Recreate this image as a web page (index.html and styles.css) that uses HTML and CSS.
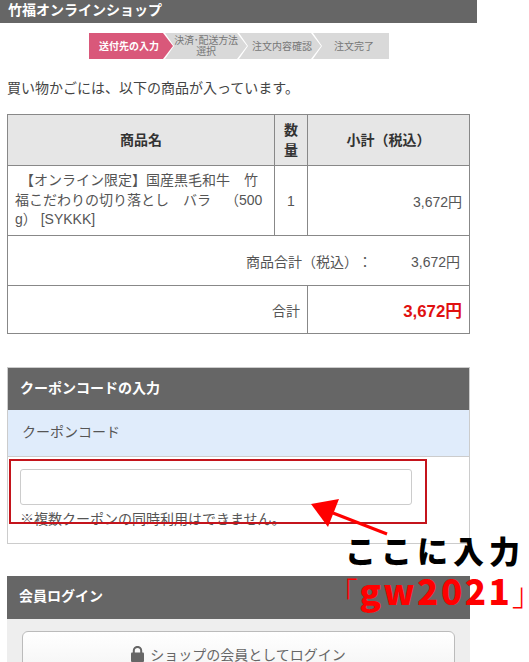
FILE: index.html
```html
<!DOCTYPE html>
<html lang="ja">
<head>
    <meta charset="utf-8">
    <title>竹福オンラインショップ</title>
    <link rel="stylesheet" href="styles.css">
</head>
<body>
<div class="page">
    <div class="shop-title">竹福オンラインショップ</div>

    <div class="steps">
        <div class="step step-first step-active">送付先の入力</div>
        <div class="step step-second">決済･配送方法<br>選択</div>
        <div class="step step-third">注文内容確認</div>
        <div class="step step-last">注文完了</div>
    </div>

    <p class="intro">買い物かごには、以下の商品が入っています。</p>

    <table class="cart">
        <colgroup>
            <col class="col-name">
            <col class="col-qty">
            <col class="col-sub">
        </colgroup>
        <tr class="row-head">
            <th>商品名</th>
            <th>数量</th>
            <th>小計（税込）</th>
        </tr>
        <tr class="row-item">
            <td class="item-name">【オンライン限定】国産黒毛和牛　竹福こだわりの切り落とし　バラ　（500g） [SYKKK]</td>
            <td class="item-qty">1</td>
            <td class="price">3,672円</td>
        </tr>
        <tr class="row-subtotal">
            <td colspan="3">
                <div class="subtotal">
                    <span>商品合計（税込）：</span>
                    <span class="subtotal-price">3,672円</span>
                </div>
            </td>
        </tr>
        <tr class="row-total">
            <td colspan="2" class="total-label">合計</td>
            <td class="total-price">3,672円</td>
        </tr>
    </table>

    <div class="panel coupon">
        <h2 class="panel-title">クーポンコードの入力</h2>
        <div class="coupon-label">クーポンコード</div>
        <div class="coupon-body">
            <input type="text" class="coupon-input">
            <p class="coupon-note">※複数クーポンの同時利用はできません。</p>
        </div>
    </div>

    <div class="panel login">
        <h2 class="panel-title">会員ログイン</h2>
        <div class="login-body">
            <button class="login-button">
                <svg class="lock" width="13" height="16" viewBox="0 0 13 16">
                    <path d="M2.8 7V4.6a3.7 3.7 0 0 1 7.4 0V7" fill="none" stroke="#666" stroke-width="2"/>
                    <rect x="0" y="6.5" width="13" height="9.5" rx="1" fill="#666"/>
                </svg>
                ショップの会員としてログイン
            </button>
        </div>
    </div>

    <!-- annotation drawn over the screenshot -->
    <div class="mark-box"></div>
    <svg class="mark-arrow" width="90" height="45" viewBox="0 0 90 45">
        <path d="M82 39 L28 18" stroke="#f00" stroke-width="3" fill="none"/>
        <path d="M6 9 L34 4 L23 32 Z" fill="#f00"/>
    </svg>
    <div class="mark-text">ここに入力</div>
    <div class="mark-code"><span class="mark-bracket">「</span>gw2021<span class="mark-bracket">」</span></div>
</div>
</body>
</html>
```

FILE: styles.css
```css
html, body {
    margin: 0;
    padding: 0;
    background-color: #fff;
}

body {
    font-family: "Liberation Sans", "Noto Sans CJK JP", sans-serif;
    color: #555;
    font-size: 14px;
    text-spacing-trim: space-all;
}

.page {
    position: relative;
    width: 529px;
    height: 662px;
    overflow: hidden;
}

.shop-title {
    width: 469px;
    height: 23px;
    padding-left: 8px;
    background-color: #666;
    color: #fff;
    font-size: 14px;
    font-weight: bold;
    line-height: 20px;
}

/* steps */
.steps {
    display: flex;
    margin: 10px 0 0 89px;
    height: 26px;
}

.step {
    display: flex;
    align-items: center;
    justify-content: center;
    height: 26px;
    margin-left: -8px;
    background-color: #d9d9d9;
    color: #777;
    font-size: 10px;
    line-height: 11px;
    text-align: center;
    clip-path: polygon(0 0, calc(100% - 10px) 0, 100% 50%, calc(100% - 10px) 100%, 0 100%, 9px 50%);
}

.step-first {
    width: 84px;
    margin-left: 0;
    padding-right: 4px;
    box-sizing: border-box;
    clip-path: polygon(0 0, calc(100% - 10px) 0, 100% 50%, calc(100% - 10px) 100%, 0 100%);
}

.step-second {
    width: 82px;
    letter-spacing: -0.2px;
}

.step-third {
    width: 82px;
    box-sizing: border-box;
    padding-left: 4px;
}

.step-last {
    width: 76px;
    box-sizing: border-box;
    padding-left: 6px;
    clip-path: polygon(0 0, 100% 0, 100% 100%, 0 100%, 9px 50%);
}

.step-active {
    background-color: #d9587a;
    color: #fff;
    font-weight: bold;
}

.intro {
    margin: 19px 0 0 7px;
    font-size: 14px;
    line-height: 20px;
    color: #444;
}

/* cart table */
.cart {
    width: 463px;
    margin: 16px 0 0 7px;
    border-collapse: collapse;
    table-layout: fixed;
}

.col-name { width: 267px; }
.col-qty { width: 33px; }

.cart th, .cart td {
    border: 1px solid #888;
    padding: 0 7px;
    font-size: 14px;
}

.cart th {
    background-color: #e6e6e6;
    color: #333;
    line-height: 20px;
}

.row-head { height: 51px; }
.row-item { height: 70px; }
.row-subtotal { height: 50px; }
.row-total { height: 48px; }

.item-name {
    line-height: 19.5px;
    text-indent: 5px;
    word-break: break-all;
}

.item-qty { text-align: center; }
.price { text-align: right; }

.subtotal {
    display: flex;
    justify-content: flex-end;
    gap: 39px;
}

.subtotal-price { padding-right: 2px; }

.total-label { text-align: right; }

.cart .total-price {
    text-align: right;
    color: #e01010;
    font-size: 16.8px;
    font-weight: bold;
}

/* panels */
.panel-title {
    margin: 0;
    background-color: #666;
    color: #fff;
    font-size: 14px;
    font-weight: bold;
}

.coupon {
    width: 461px;
    height: 175px;
    margin: 33px 0 0 7px;
    border: 1px solid #ccc;
}

.coupon .panel-title {
    height: 42px;
    padding-left: 12px;
    line-height: 40px;
}

.coupon-label {
    height: 46px;
    padding-left: 14px;
    background-color: #e0ecfb;
    border-bottom: 1px solid #ccc;
    font-size: 14px;
    line-height: 45px;
}

.coupon-body {
    padding: 12px 12px 0;
}

.coupon-input {
    display: block;
    box-sizing: border-box;
    width: 392px;
    height: 36px;
    border: 1px solid #ccc;
    border-radius: 3px;
    background-color: #fff;
}

.coupon-note {
    margin: 5px 0 0;
    font-size: 14px;
    line-height: 18px;
}

.login {
    width: 463px;
    margin: 32px 0 0 7px;
}

.login .panel-title {
    height: 43px;
    padding-left: 12px;
    line-height: 41px;
}

.login-body {
    padding: 12px 15px;
    background-color: #eee;
}

.login-button {
    display: block;
    box-sizing: border-box;
    width: 433px;
    height: 50px;
    padding: 0 0 5px;
    border: 1px solid #bbb;
    border-radius: 6px;
    background-color: #fff;
    background-image: linear-gradient(#fff, #f2f2f2);
    color: #666;
    font-family: inherit;
    font-size: 14px;
}

.lock {
    vertical-align: -2px;
    margin-right: 2px;
}

/* annotation */
.mark-box {
    position: absolute;
    left: 9px;
    top: 459px;
    width: 414px;
    height: 61px;
    border: 2px solid #c4141c;
}

.mark-arrow {
    position: absolute;
    left: 305px;
    top: 495px;
}

.mark-text {
    position: absolute;
    left: 345px;
    top: 534px;
    color: #000;
    font-family: "Noto Sans CJK JP", sans-serif;
    font-size: 31px;
    font-weight: 900;
    line-height: 32px;
    letter-spacing: 5px;
    white-space: nowrap;
}

.mark-code {
    position: absolute;
    left: 342px;
    top: 573px;
    color: #f00;
    font-family: "Noto Sans CJK JP", sans-serif;
    font-size: 35px;
    font-weight: 900;
    line-height: 34px;
    letter-spacing: 2.5px;
    white-space: nowrap;
    font-feature-settings: "palt";
}

.mark-bracket {
    font-weight: 300;
    font-size: 31px;
    letter-spacing: 2px;
}
```
